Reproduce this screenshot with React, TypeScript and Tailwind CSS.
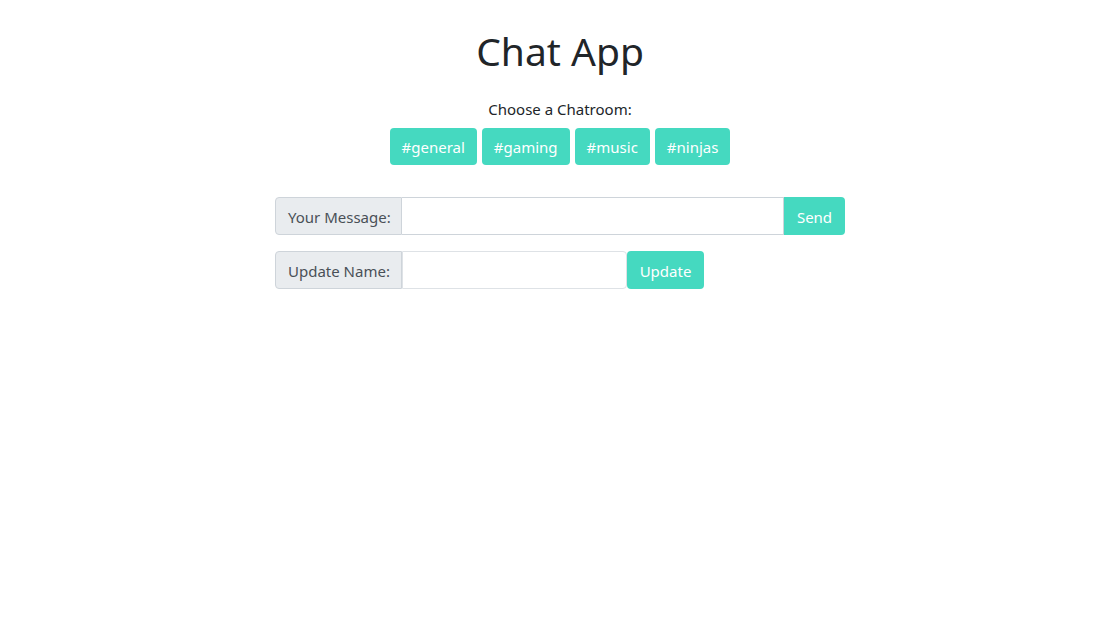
import React from "react";

export default function App() {
  const rooms = ["#general", "#gaming", "#music", "#ninjas"];
  return (
    <div
      className="w-[1120px] h-[624px] bg-white text-[#212529]"
      style={{ fontFamily: '"Noto Sans", "Open Sans", sans-serif' }}
    >
      <div className="w-[570px] mx-auto flex flex-col">
        <h1 className="text-[39px] leading-[48px] font-normal text-center mt-[27px]">Chat App</h1>
        <div className="text-[15px] leading-[24px] text-center mt-[22px]">Choose a Chatroom:</div>
        <div className="flex justify-center gap-[5px] mt-[7px]">
          {rooms.map((r) => (
            <button
              key={r}
              className="h-[37px] px-[12px] pt-[2px] rounded-[4px] bg-[#45d9c0] text-white text-[15px]"
            >
              {r}
            </button>
          ))}
        </div>
        <div className="flex mt-[32px] h-[38px]">
          <div className="flex shrink-0 whitespace-nowrap items-center px-[12px] pt-[2px] bg-[#e9ecef] border border-[#ced4da] rounded-l-[4px] text-[#495057] text-[15px] w-[127px]">
            Your Message:
          </div>
          <input className="flex-1 min-w-0 border border-[#ced4da] border-l-0 outline-none px-3" />
          <button className="w-[61px] shrink-0 pt-[2px] bg-[#45d9c0] text-white text-[15px] rounded-r-[4px]">Send</button>
        </div>
        <div className="flex mt-[16px] h-[38px]">
          <div className="flex shrink-0 whitespace-nowrap items-center px-[12px] pt-[2px] bg-[#e9ecef] border border-[#ced4da] rounded-l-[4px] text-[#495057] text-[15px] w-[127px]">
            Update Name:
          </div>
          <input className="w-[225px] min-w-0 border border-[#dee2e6] outline-none px-3 rounded-r-[4px]" />
          <button className="w-[77px] shrink-0 pt-[2px] bg-[#45d9c0] text-white text-[15px] rounded-[4px]">Update</button>
        </div>
      </div>
    </div>
  );
}
